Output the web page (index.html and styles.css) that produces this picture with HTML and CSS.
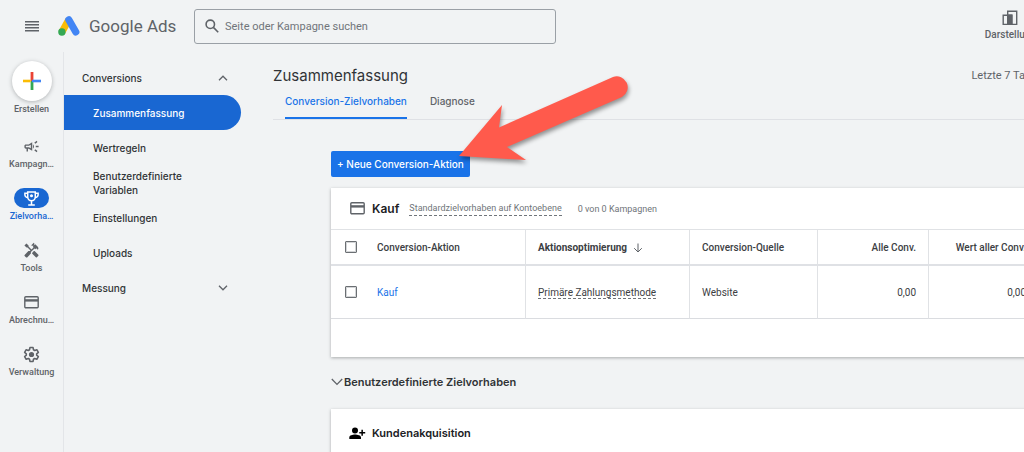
FILE: index.html
```html
<!DOCTYPE html>
<html lang="de">
<head>
<meta charset="utf-8">
<meta name="viewport" content="width=device-width, initial-scale=1">
<title>Google Ads – Zusammenfassung</title>
<link rel="stylesheet" href="styles.css">
</head>
<body>
<div class="app">
  <header class="topbar">
    <button class="menu-button" aria-label="Menü">
      <svg width="14" height="12" viewBox="0 0 14 12" fill="#5f6368"><path d="M0 1h14v1.4H0zM0 4h14v1.4H0zM0 7h14v1.4H0zM0 10h14v1.4H0z"/></svg>
    </button>
    <a class="brand" href="#">
      <svg width="22" height="20" viewBox="0 0 22 20"><path d="M3.8 16.2 10.6 4" stroke="#fbbc04" stroke-width="7" fill="none"/><path d="M10.8 3.8 17.8 16" stroke="#4285f4" stroke-width="7.2" stroke-linecap="round"/><circle cx="3.9" cy="16" r="3.7" fill="#34a853"/></svg>
      <span>Google Ads</span>
    </a>
    <label class="search">
      <svg width="14" height="14" viewBox="0 0 14 14" fill="none" stroke="#5f6368" stroke-width="1.6"><circle cx="5.3" cy="5.3" r="4.2"/><path d="m8.4 8.4 4.8 4.8"/></svg>
      <input type="text" placeholder="Seite oder Kampagne suchen" aria-label="Seite oder Kampagne suchen">
    </label>
    <button class="appearance">
      <svg width="16" height="16" viewBox="0 0 16 16" fill="none" stroke="#5f6368" stroke-width="1.4"><path d="M5.700 1.200h9v13.200h-9zM1.200 5.200h8.600v9.200H1.200z"/><path d="M5.700 5.200h4.100v9.200H5.700z" fill="#5f6368"/></svg>
      <span>Darstellung</span>
    </button>
  </header>

  <div class="body">
    <nav class="rail" aria-label="Hauptnavigation">
      <button class="create">
        <span class="create-disc"><svg width="18" height="18" viewBox="0 0 18 18"><path d="M7.600 0h2.800v9H7.600z" fill="#ea4335"/><path d="M7.600 9h2.800v9H7.600z" fill="#34a853"/><path d="M0 7.700h7.600v2.600H0z" fill="#fbbc04"/><path d="M9 7.700h9v2.600H9z" fill="#4285f4"/></svg></span>
        <span>Erstellen</span>
      </button>
      <a class="rail-item" href="#">
        <span class="rail-icon"><svg width="17" height="17" viewBox="0 0 24 24" fill="currentColor"><path d="M18 11v2h4v-2h-4zm-2 6.600c1 .7 2.200 1.600 3.200 2.400l1.200-1.600c-1-.8-2.200-1.700-3.200-2.400l-1.200 1.600zM20.400 5.600 19.200 4c-1 .8-2.200 1.700-3.200 2.400L17.200 8c1-.7 2.200-1.600 3.200-2.400zM4 9c-1.100 0-2 .9-2 2v2c0 1.100.9 2 2 2h1v4h2v-4h1l5 3V6L8 9H4zm5.030 1.710L11 9.530v4.940l-1.970-1.180-.48-.29H4v-2h4.550l.48-.29zM15.500 12c0-1.330-.58-2.530-1.500-3.350v6.690c.92-.81 1.500-2.010 1.500-3.340z"/></svg></span>
        <span>Kampagn…</span>
      </a>
      <a class="rail-item active" href="#" aria-current="page">
        <span class="rail-icon"><svg width="17" height="17" viewBox="0 0 18 18" fill="none" stroke="currentColor" stroke-width="1.600"><path d="M5 2h8v5.500a4 4 0 0 1-8 0zM5 3.500H2V5a3 3 0 0 0 3.200 3M13 3.500h3V5a3 3 0 0 1-3.200 3M9 11.500V16M5.500 16h7"/><circle cx="9" cy="6" r="1.600" fill="currentColor" stroke="none"/></svg></span>
        <span>Zielvorha…</span>
      </a>
      <a class="rail-item" href="#">
        <span class="rail-icon"><svg width="17" height="17" viewBox="0 0 24 24" fill="currentColor"><path d="m21.670 18.170-5.300-5.300h-.99l-2.540 2.540v.99l5.300 5.300c.39.39 1.020.39 1.410 0l2.120-2.120c.39-.38.39-1.020 0-1.410z"/><path d="m17.340 10.190 1.410-1.410 2.120 2.120c1.170-1.170 1.170-3.070 0-4.240l-3.540-3.540-1.410 1.410V1.710L15.220 1l-3.540 3.540.71.710h2.830l-1.410 1.410 1.060 1.060-2.890 2.890-4.130-4.130V5.060L4.830 2.040 2 4.870 5.030 7.900h1.410l4.130 4.130-.85.850H7.600l-5.300 5.300c-.39.39-.39 1.020 0 1.410l2.120 2.120c.39.39 1.020.39 1.410 0l5.300-5.300v-2.120l5.150-5.150 1.060 1.050z"/></svg></span>
        <span>Tools</span>
      </a>
      <a class="rail-item" href="#">
        <span class="rail-icon"><svg width="15" height="13" viewBox="0 0 15 13"><rect x=".8" y=".8" width="13.400" height="11" rx="1" fill="none" stroke="currentColor" stroke-width="1.400"/><path d="M1 3.200h13v2.400H1z" fill="currentColor"/></svg></span>
        <span>Abrechnu…</span>
      </a>
      <a class="rail-item" href="#">
        <span class="rail-icon"><svg width="17" height="17" viewBox="0 0 24 24" fill="none" stroke="currentColor" stroke-width="2.200" stroke-linejoin="round"><path d="m9.800 2.200h4.400l.6 3.100 1.700 1 3-1.100 2.200 3.800-2.400 2v2l2.400 2-2.200 3.800-3-1.100-1.700 1-.6 3.100H9.800l-.6-3.100-1.700-1-3 1.100L2.300 15l2.400-2v-2L2.300 9l2.200-3.800 3 1.100 1.700-1z"/><circle cx="12" cy="12" r="2.600" fill="currentColor"/></svg></span>
        <span>Verwaltung</span>
      </a>
    </nav>

    <nav class="sidebar" aria-label="Zielvorhaben">
      <button class="group">Conversions <svg width="10" height="6" viewBox="0 0 10 6"><path d="M1 5.200 5 1.200l4 4"/></svg></button>
      <a class="side-link selected" href="#" aria-current="page">Zusammenfassung</a>
      <a class="side-link" href="#">Wertregeln</a>
      <a class="side-link" href="#">Benutzerdefinierte<br>Variablen</a>
      <a class="side-link" href="#">Einstellungen</a>
      <a class="side-link" href="#">Uploads</a>
      <button class="group">Messung <svg width="10" height="6" viewBox="0 0 10 6"><path d="m1 .8 4 4 4-4"/></svg></button>
    </nav>

    <main class="content">
      <div class="title-row">
        <h1>Zusammenfassung</h1>
        <span class="period">Letzte 7 Tage</span>
      </div>
      <div class="tabs" role="tablist">
        <button class="tab current" role="tab" aria-selected="true">Conversion-Zielvorhaben</button>
        <button class="tab" role="tab" aria-selected="false">Diagnose</button>
      </div>
      <div class="panel">
        <button class="primary">+ Neue Conversion-Aktion</button>
        <section class="card">
          <div class="card-head">
            <svg width="15" height="13" viewBox="0 0 15 13"><rect x=".8" y=".8" width="13.400" height="11" rx="1" fill="none" stroke="#5f6368" stroke-width="1.400"/><path d="M1 3.200h13v2.400H1z" fill="#5f6368"/></svg>
            <h2>Kauf</h2>
            <span class="scope"><span class="hint">Standardzielvorhaben auf Kontoebene</span><span>0 von 0 Kampagnen</span></span>
          </div>
          <table>
            <colgroup><col class="c-check"><col class="c-action"><col class="c-opt"><col class="c-source"><col class="c-all"><col></colgroup>
            <thead>
              <tr>
                <th class="check"><input type="checkbox" aria-label="Alle auswählen"></th>
                <th class="name">Conversion-Aktion</th>
                <th class="sorted">Aktionsoptimierung <svg width="10" height="10" viewBox="0 0 10 10" fill="none" stroke="#5f6368"><path d="M5 .5v8.500M1.200 5.200 5 9l3.800-3.800"/></svg></th>
                <th>Conversion-Quelle</th>
                <th class="num">Alle Conv.</th>
                <th class="num">Wert aller Conv.</th>
              </tr>
            </thead>
            <tbody>
              <tr>
                <td class="check"><input type="checkbox" aria-label="Kauf auswählen"></td>
                <td class="name"><a href="#">Kauf</a></td>
                <td><span class="hint">Primäre Zahlungsmethode</span></td>
                <td>Website</td>
                <td class="num">0,00</td>
                <td class="num">0,00</td>
              </tr>
            </tbody>
          </table>
        </section>
        <button class="expander"><svg width="12" height="8" viewBox="0 0 12 8"><path d="m.8 1 5.200 5.400L11.200 1"/></svg>Benutzerdefinierte Zielvorhaben</button>
        <section class="card">
          <div class="card-head customer">
            <svg width="17" height="13" viewBox="0 0 17 13"><circle cx="6" cy="3.400" r="3"/><path d="M.3 12V10.200C.3 8.300 3.500 7.400 6 7.400s6 .9 6 2.800V12zM12.400 2.800h1.500V5h2.300v1.500h-2.300v2.300h-1.500V6.500h-2.100V5h2.100z"/></svg>
            <h2>Kundenakquisition</h2>
          </div>
        </section>
      </div>
    </main>
  </div>
  <svg class="pointer" width="190" height="110" viewBox="450 65 190 110" aria-hidden="true"><path d="M459 156 502 105 499 127.500 613 77A11 11 0 0 1 622 97L507 147 526 160Z" fill="#ff5a4c"/></svg>
</div>
</body>
</html>
```
FILE: styles.css
```css
* { box-sizing: border-box; }
body {
  margin: 0;
  background: #f1f3f4;
  color: #3c4043;
  font: 10px/14px Roboto, "Liberation Sans", sans-serif;
  overflow: hidden;
}
button { border: 0; padding: 0; background: none; color: inherit; font: inherit; cursor: pointer; }
a { color: inherit; text-decoration: none; }
h1, h2 { margin: 0; }
svg { flex: none; }

.app { position: relative; min-width: 1039px; min-height: 100vh; display: flex; flex-direction: column; }
.topbar { display: flex; align-items: center; height: 52px; padding-right: 3px; }
.menu-button { display: grid; place-items: center; width: 58px; padding-left: 6px; height: 32px; }
.brand { display: flex; align-items: center; gap: 9px; width: 136px; color: #5f6368; font-size: 17px; line-height: 24px; white-space: nowrap; }
.search { display: flex; align-items: center; gap: 6px; width: 362px; height: 35px; padding: 0 10px; border: 1px solid #9aa0a6; border-radius: 3px; }
.search input { flex: 1; min-width: 0; padding: 2px 0 0; border: 0; outline: 0; background: none; font: 11px/16px Roboto, sans-serif; color: #3c4043; }
.search input::placeholder { color: #70757a; opacity: 1; }
.appearance { display: flex; flex-direction: column; align-items: center; margin-left: auto; color: #5f6368; font-weight: 500; }
.appearance svg { margin-bottom: 2px; }

.body { flex: 1; display: flex; }
.rail { display: flex; flex-direction: column; align-items: center; flex: none; width: 64px; border-right: 1px solid #e3e5e8; padding-top: 9px; color: #5f6368; font-size: 9px; line-height: 12px; font-weight: 500; }
.create { display: flex; flex-direction: column; align-items: center; gap: 2px; margin-bottom: 21px; }
.create-disc { display: grid; place-items: center; width: 40px; height: 40px; border-radius: 50%; background: #fff; box-shadow: 0 1px 4px rgba(60, 64, 67, .35); }
.rail-item { display: flex; flex-direction: column; align-items: center; gap: 2px; height: 52px; }
.rail-icon { display: grid; place-items: center; width: 35px; height: 20px; border-radius: 10px; }
.rail-item.active { color: #1967d2; }
.rail-item.active .rail-icon { background: #1967d2; color: #fff; }

.sidebar { flex: none; width: 209px; padding-top: 8px; font: 500 10px/14px Inter, sans-serif; color: #303336; }
.group { display: flex; justify-content: space-between; align-items: center; width: 177px; height: 35px; padding: 0 13px 0 18px; }
.group svg, .expander svg { fill: none; stroke: #5f6368; stroke-width: 1.3; }
.side-link { display: flex; align-items: center; width: 177px; min-height: 35px; padding: 3px 29px; }
.side-link.selected { background: #1967d2; color: #fff; border-radius: 0 18px 18px 0; }

.content { flex: 1; min-width: 0; }
.title-row { display: flex; justify-content: space-between; align-items: center; height: 32px; margin-top: 8px; padding-right: 2px; }
.title-row h1 { font: 400 15px/24px Inter, sans-serif; color: #303336; }
.period { font-size: 11px; color: #5f6368; }
.tabs { display: flex; gap: 23px; height: 28px; padding-left: 12px; border-bottom: 1px solid #dfe1e5; }
.tab { height: 27px; padding-bottom: 10px; font: 500 10px/14px Inter, sans-serif; color: #5f6368; }
.tab.current { color: #1a73e8; border-bottom: 2px solid #1a73e8; padding-bottom: 8px; }
.panel { display: flex; flex-direction: column; align-items: flex-start; padding: 31px 0 0 58px; }
.primary { height: 26px; padding: 0 6px; border-radius: 2px; background: #1a73e8; color: #fff; font: 500 10px/14px Inter, sans-serif; }
.card { align-self: stretch; background: #fff; box-shadow: 0 1px 3px rgba(60, 64, 67, .4); }
.primary + .card { margin-top: 11px; padding-bottom: 38px; }
.card-head { display: flex; align-items: center; gap: 7px; height: 41px; padding-left: 19px; color: #70757a; }
.card-head h2 { color: #202124; font: 600 12px/16px Inter, sans-serif; }
.card-head.customer { height: 48px; padding-left: 18px; gap: 6px; }
.card-head.customer h2 { font-size: 11px; }
.scope { display: flex; gap: 16px; padding: 1px 0 0 3px; font-size: 9px; }
.hint { border-bottom: 1px dashed #70757a; line-height: 12px; }
table { width: 100%; table-layout: fixed; border-collapse: separate; border-spacing: 0; }
.c-check { width: 40px; } .c-action { width: 155px; } .c-opt { width: 164px; } .c-source { width: 128px; } .c-all { width: 111px; }
th, td { padding: 2px 12px 0; border-right: 1px solid #e0e2e5; text-align: left; white-space: nowrap; color: #3c4043; }
th { height: 37px; border-top: 1px solid #e0e2e5; border-bottom: 2px solid #dfe1e5; font-weight: 500; }
td { height: 53px; border-bottom: 1px solid #dadce0; }
.check { padding: 0 14px; border-right: 0; }
.name { padding-left: 6px; }
.sorted { font-weight: 700; }
.sorted svg { margin-left: 3px; vertical-align: -2px; }
.num { text-align: right; }
td a { color: #1a73e8; }
input[type="checkbox"] { appearance: none; display: block; width: 12px; height: 12px; margin: 0; border: 1px solid #6b6f73; border-radius: 1px; box-shadow: inset 0 0 0 1px #d3d5d7; }
.expander { display: flex; align-items: center; gap: 1px; height: 50px; margin-bottom: 2px; font: 600 11px/16px Inter, sans-serif; color: #303336; }
.pointer { position: absolute; left: 450px; top: 65px; filter: drop-shadow(1px 3px 2px rgba(0, 0, 0, .4)); pointer-events: none; }
```
